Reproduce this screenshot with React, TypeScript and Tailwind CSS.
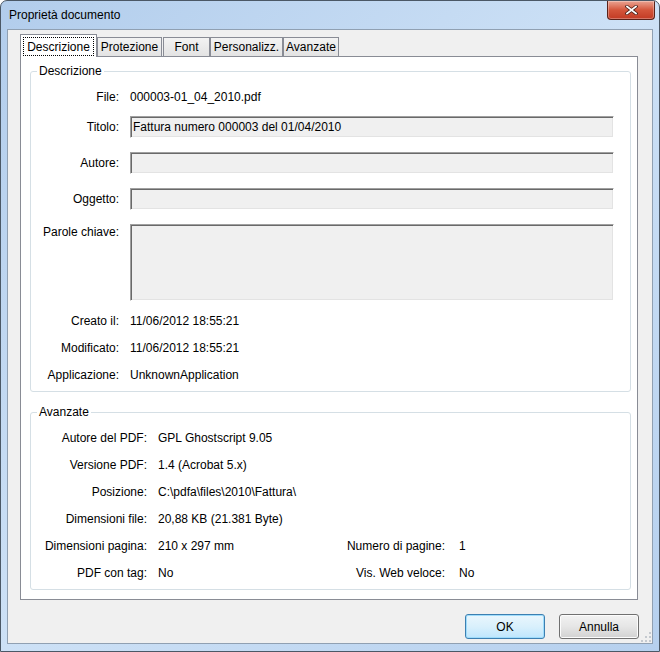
import React from "react"

const Field: React.FC<{ value?: string; tall?: boolean }> = ({ value, tall }) => {
    return (
        <div
            className={`w-[484px] ${tall ? "h-[77px]" : "h-[22px]"} bg-[#f0f0f0] border border-t-[#a0a0a0] border-l-[#a0a0a0] border-r-white border-b-white shadow-[inset_1px_1px_0_#696969,inset_-1px_-1px_0_#e3e3e3] pl-[2px] flex items-center`}
        >
            {value}
        </div>
    )
}

const DescRow: React.FC<{ label: string; className?: string; children: React.ReactNode }> = ({ label, className, children }) => {
    return (
        <div className={`flex items-center ${className ?? ""}`}>
            <div className="w-[88px] text-right">{label}</div>
            <div className="ml-[11px] flex items-center h-[22px]">{children}</div>
        </div>
    )
}

const AdvRow: React.FC<{ label: string; value: string; rightLabel?: string; rightValue?: string; first?: boolean }> = ({
    label,
    value,
    rightLabel,
    rightValue,
    first,
}) => {
    return (
        <div className={`flex items-center h-[22px] ${first ? "mt-[7px]" : "mt-[5px]"}`}>
            <div className="w-[116px] text-right">{label}</div>
            <div className="ml-[11px] w-[182px]">{value}</div>
            {rightLabel && (
                <React.Fragment>
                    <div className="w-[105px] text-right">{rightLabel}</div>
                    <div className="ml-[14px]">{rightValue}</div>
                </React.Fragment>
            )}
        </div>
    )
}

const Tab: React.FC<{ label: string; width: string; className?: string }> = ({ label, width, className }) => {
    return (
        <div
            className={`${width} ${className ?? ""} mt-[3px] h-[19px] border border-b-0 border-[#898c95] bg-gradient-to-b from-[#f3f3f3] to-[#e3e3e3] flex items-center justify-center`}
        >
            {label}
        </div>
    )
}

export default function App() {
    return (
        <div className="w-[660px] h-[652px] flex flex-col border border-[#4b5866] rounded-t-[7px] bg-gradient-to-br from-[#b2cdec] via-[#cde1f6] to-[#b6d0ee] font-['Liberation_Sans',Arial,sans-serif] text-[12px] leading-[16px] text-black overflow-hidden">
            {/* title bar */}
            <div className="h-[28px] flex items-start">
                <div className="pl-[8px] pt-[6px]">Proprietà documento</div>
                <div className="ml-auto mr-[4px] w-[48px] h-[19px] rounded-b-[4px] border border-t-0 border-[#5a2219] bg-gradient-to-b from-[#e9a392] via-[#d4553b] to-[#c23a24] flex items-center justify-center shadow-[inset_0_0_0_1px_rgba(255,255,255,0.3)]">
                    <svg width="13" height="10" viewBox="0 0 13 10">
                        <path d="M2 1.5 L6.5 5 L11 1.5 M2 8.5 L6.5 5 L11 8.5" stroke="#4a2018" strokeWidth="3.4" strokeLinecap="square" fill="none" />
                        <path d="M2 1.5 L6.5 5 L11 1.5 M2 8.5 L6.5 5 L11 8.5" stroke="#ffffff" strokeWidth="1.7" strokeLinecap="square" fill="none" />
                    </svg>
                </div>
            </div>

            {/* client area */}
            <div className="relative flex-1 mx-[6px] mb-[7px] border border-[#90a0b2] bg-[#f0f0f0] flex flex-col">
                <div className="ml-[12px] mr-[14px] mt-[4px] flex flex-col">
                    {/* tabs */}
                    <div className="flex h-[22px] items-start">
                        <div className="relative z-10 w-[77px] h-[23px] border border-b-0 border-[#898c95] bg-white flex p-[2px] pb-[1px]">
                            <div className="flex-1 border border-dotted border-black flex items-center justify-center">Descrizione</div>
                        </div>
                        <Tab label="Protezione" width="w-[65px]" />
                        <Tab label="Font" width="w-[47px]" className="ml-[1px]" />
                        <Tab label="Personalizz." width="w-[73px]" />
                        <Tab label="Avanzate" width="w-[56px]" />
                    </div>

                    {/* panel */}
                    <div className="h-[544px] border border-[#898c95] bg-white flex flex-col">
                        <fieldset className="mt-[6px] ml-[9px] w-[601px] m-0 p-0 pb-[5px] border border-[#d5dfe5] rounded-[3px] min-w-0">
                            <legend className="ml-[6px] px-[2px] leading-[16px]">Descrizione</legend>
                            <DescRow label="File:" className="mt-[7px]">
                                000003-01_04_2010.pdf
                            </DescRow>
                            <DescRow label="Titolo:" className="mt-[8px]">
                                <Field value="Fattura numero 000003 del 01/04/2010" />
                            </DescRow>
                            <DescRow label="Autore:" className="mt-[14px]">
                                <Field />
                            </DescRow>
                            <DescRow label="Oggetto:" className="mt-[14px]">
                                <Field />
                            </DescRow>
                            <div className="flex items-start mt-[14px]">
                                <div className="w-[88px] text-right">Parole chiave:</div>
                                <div className="ml-[11px]">
                                    <Field tall />
                                </div>
                            </div>
                            <DescRow label="Creato il:" className="mt-[9px]">
                                11/06/2012 18:55:21
                            </DescRow>
                            <DescRow label="Modificato:" className="mt-[5px]">
                                11/06/2012 18:55:21
                            </DescRow>
                            <DescRow label="Applicazione:" className="mt-[5px]">
                                UnknownApplication
                            </DescRow>
                        </fieldset>

                        <fieldset className="mt-[12px] ml-[9px] w-[601px] m-0 p-0 pb-[5px] border border-[#d5dfe5] rounded-[3px] min-w-0">
                            <legend className="ml-[6px] px-[2px] leading-[16px]">Avanzate</legend>
                            <AdvRow first label="Autore del PDF:" value="GPL Ghostscript 9.05" />
                            <AdvRow label="Versione PDF:" value="1.4 (Acrobat 5.x)" />
                            <AdvRow label="Posizione:" value="C:\pdfa\files\2010\Fattura\" />
                            <AdvRow label="Dimensioni file:" value="20,88 KB (21.381 Byte)" />
                            <AdvRow label="Dimensioni pagina:" value="210 x 297 mm" rightLabel="Numero di pagine:" rightValue="1" />
                            <AdvRow label="PDF con tag:" value="No" rightLabel="Vis. Web veloce:" rightValue="No" />
                        </fieldset>
                    </div>
                </div>

                {/* buttons */}
                <div className="mt-[14px] mr-[13px] flex justify-end gap-[14px]">
                    <button
                        type="button"
                        className="w-[80px] h-[25px] rounded-[3px] border border-[#3c7fb1] bg-gradient-to-b from-[#eaf6fd] via-[#d9f0fc] to-[#bee6fd] shadow-[inset_0_0_0_1px_#9fdcfb] text-[12px]"
                    >
                        OK
                    </button>
                    <button
                        type="button"
                        className="w-[80px] h-[25px] rounded-[3px] border border-[#707070] bg-gradient-to-b from-[#f2f2f2] via-[#e6e6e6] to-[#d2d2d2] shadow-[inset_0_0_0_1px_#fcfcfc] text-[12px]"
                    >
                        Annulla
                    </button>
                </div>

                {/* size grip */}
                <svg className="absolute right-[1px] bottom-[1px]" width="10" height="10" viewBox="0 0 10 10">
                    <rect x="8" y="0" width="2" height="2" fill="#c4c9cf" />
                    <rect x="4" y="4" width="2" height="2" fill="#c4c9cf" />
                    <rect x="8" y="4" width="2" height="2" fill="#c4c9cf" />
                    <rect x="0" y="8" width="2" height="2" fill="#c4c9cf" />
                    <rect x="4" y="8" width="2" height="2" fill="#c4c9cf" />
                    <rect x="8" y="8" width="2" height="2" fill="#c4c9cf" />
                </svg>
            </div>
        </div>
    )
}
